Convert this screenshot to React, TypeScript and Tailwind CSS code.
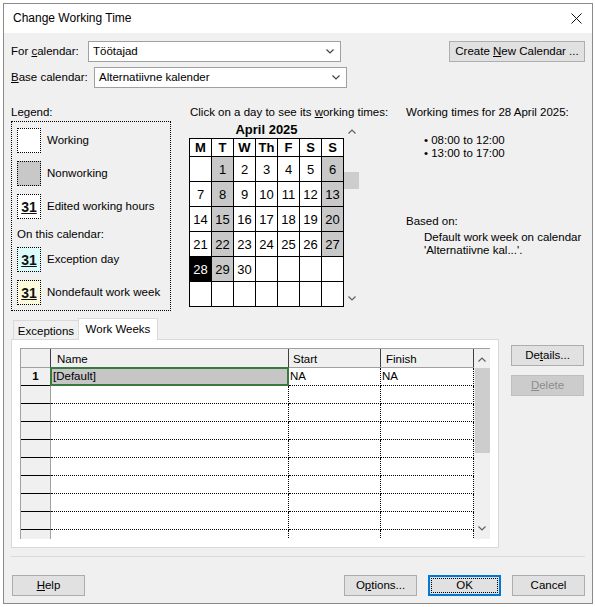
import React from 'react';

const Chevron = ({ up = false, color = '#606060', w = 8 }: { up?: boolean; color?: string; w?: number }) => (
  <svg width={w} height="5" viewBox={`0 0 ${w} 5`}>
    <polyline
      points={up ? `0.5,4.5 ${w / 2},1 ${w - 0.5},4.5` : `0.5,0.5 ${w / 2},4 ${w - 0.5},0.5`}
      fill="none"
      stroke={color}
      strokeWidth="1.2"
    />
  </svg>
);

const Btn = ({ children, className = '' }: { children: React.ReactNode; className?: string }) => (
  <div className={`h-[21px] flex items-center justify-center bg-[#e1e1e1] border border-[#adadad] ${className}`}>
    <span>{children}</span>
  </div>
);

const Combo = ({ value }: { value: string }) => (
  <div className="w-[253px] h-[21px] bg-white border border-[#a0a0a0] flex items-center pl-[4px] pr-[6px]">
    <span className="flex-1">{value}</span>
    <Chevron color="#444" w={8} />
  </div>
);

const Swatch = ({ bg, num = false }: { bg: string; num?: boolean }) => (
  <div className={`w-[24px] h-[25px] shrink-0 border border-dotted border-black flex items-center justify-center ${bg}`}>
    {num && <span className="font-bold text-[14px] underline leading-none text-[#111]">31</span>}
  </div>
);

const weeks: (number | null)[][] = [
  [null, 1, 2, 3, 4, 5, 6],
  [7, 8, 9, 10, 11, 12, 13],
  [14, 15, 16, 17, 18, 19, 20],
  [21, 22, 23, 24, 25, 26, 27],
  [28, 29, 30, null, null, null, null],
  [null, null, null, null, null, null, null],
];

const dayCls = (d: number | null, col: number) => {
  if (d === 28) return 'bg-black text-white';
  if (d && (col === 1 || col === 6)) return 'bg-[#c8c8c8]';
  return 'bg-white';
};

const GridRow = ({ first = false }: { first?: boolean }) => (
  <div className="flex h-[18px]">
    <div className="w-[30px] bg-[#f0f0f0] border-b border-b-black border-r border-r-[#a0a0a0] flex items-center justify-center font-bold">
      {first ? '1' : ''}
    </div>
    <div className="relative w-[238px] border-b border-r border-dotted border-black flex items-center pl-[2px] bg-white">
      {first && (
        <>
          <div className="absolute -left-px -top-px -right-px -bottom-px bg-[#c6c6c6] border-2 border-[#3b7a3e]" />
          <span className="relative">[Default]</span>
        </>
      )}
    </div>
    <div className="w-[92px] border-b border-r border-dotted border-black flex items-center pl-[1px] bg-white">
      {first ? 'NA' : ''}
    </div>
    <div className="w-[93px] border-b border-r border-dotted border-black flex items-center pl-[1px] bg-white">
      {first ? 'NA' : ''}
    </div>
  </div>
);

export default function App() {
  return (
    <div className="w-[595px] h-[607px] bg-white pt-[3px] pl-[3px] font-['Liberation_Sans',Arial,sans-serif] text-black text-[11.5px] leading-[15px]">
      <div className="w-[590px] h-[601px] border border-[#8a8a8a] flex flex-col">
        {/* title bar */}
        <div className="h-[29px] bg-white flex items-center pl-[9px] pr-[10px]">
          <span className="flex-1 text-[12px]">Change Working Time</span>
          <svg width="11" height="11" viewBox="0 0 11 11">
            <path d="M0.5 0.5 L10.5 10.5 M10.5 0.5 L0.5 10.5" stroke="#111" strokeWidth="1" />
          </svg>
        </div>

        {/* body */}
        <div className="flex-1 bg-[#f0f0f0] pt-[8px] px-[7px]">
          {/* calendar selectors */}
          <div className="flex justify-between">
            <div className="flex flex-col gap-[5px]">
              <div className="flex items-center">
                <span className="w-[77px]">
                  For <span className="underline">c</span>alendar:
                </span>
                <Combo value="Töötajad" />
              </div>
              <div className="flex items-center">
                <span className="w-[83px]">
                  <span className="underline">B</span>ase calendar:
                </span>
                <Combo value="Alternatiivne kalender" />
              </div>
            </div>
            <Btn className="w-[136px]">
              Create <span className="underline">N</span>ew Calendar ...
            </Btn>
          </div>

          {/* legend / calendar / details */}
          <div className="flex mt-[17px]">
            <div className="w-[160px]">
              <div className="h-[15px]">Legend:</div>
              <div className="mt-[1px] h-[190px] border border-dotted border-black pl-[5px] pt-[6px] flex flex-col">
                <div className="flex items-center gap-[6px]">
                  <Swatch bg="bg-white" />
                  <span>Working</span>
                </div>
                <div className="flex items-center gap-[6px] mt-[8px]">
                  <Swatch bg="bg-[#c8c8c8]" />
                  <span>Nonworking</span>
                </div>
                <div className="flex items-center gap-[6px] mt-[8px]">
                  <Swatch bg="bg-white" num />
                  <span>Edited working hours</span>
                </div>
                <div className="mt-[8px] h-[14px] leading-[14px]">On this calendar:</div>
                <div className="flex items-center gap-[6px] mt-[6px]">
                  <Swatch bg="bg-[#dcfbfb]" num />
                  <span>Exception day</span>
                </div>
                <div className="flex items-center gap-[6px] mt-[8px]">
                  <Swatch bg="bg-[#fcfadc]" num />
                  <span>Nondefault work week</span>
                </div>
              </div>
            </div>

            <div className="w-[217px] ml-[18px]">
              <div className="h-[15px] whitespace-nowrap pl-[1px]">
                Click on a day to see its <span className="underline">w</span>orking times:
              </div>
              <div className="flex mt-[1px]">
                <div className="flex flex-col">
                  <div className="h-[17px] flex items-center justify-center font-bold text-[13px]">April 2025</div>
                  <div className="grid grid-cols-[repeat(7,21px)] grid-rows-[17px_repeat(6,24px)] gap-px bg-black border border-black w-fit">
                    {['M', 'T', 'W', 'Th', 'F', 'S', 'S'].map((h, i) => (
                      <div key={i} className="bg-white flex items-center justify-center font-bold text-[13px]">
                        {h}
                      </div>
                    ))}
                    {weeks.map((wk, r) =>
                      wk.map((d, c) => (
                        <div key={`${r}-${c}`} className={`flex items-center justify-center text-[13px] ${dayCls(d, c)}`}>
                          {d ?? ''}
                        </div>
                      ))
                    )}
                  </div>
                </div>
                <div className="w-[15px] flex flex-col items-center">
                  <div className="mt-[8px] h-[5px]">
                    <Chevron up w={8} />
                  </div>
                  <div className="mt-[38px] w-[15px] h-[17px] bg-[#cdcdcd]" />
                  <div className="mt-[107px] h-[5px]">
                    <Chevron w={8} />
                  </div>
                </div>
              </div>
            </div>

            <div className="flex flex-col">
              <div className="h-[15px] whitespace-nowrap">Working times for 28 April 2025:</div>
              <div className="mt-[14px] pl-[18px] leading-[13px]">
                <div>• 08:00 to 12:00</div>
                <div>• 13:00 to 17:00</div>
              </div>
              <div className="mt-[54px] h-[15px]">Based on:</div>
              <div className="mt-[2px] pl-[18px] leading-[13px] whitespace-nowrap">
                <div>Default work week on calendar</div>
                <div>'Alternatiivne kal...'.</div>
              </div>
            </div>
          </div>

          {/* tabs */}
          <div className="flex mt-[7px]">
            <div className="w-[488px] flex flex-col">
              <div className="h-[21px] flex items-end pl-[2px]">
                <div className="h-[19px] w-[66px] border border-b-0 border-[#d9d9d9] bg-[#f0f0f0] flex items-center justify-center pt-[2px]">
                  Exceptions
                </div>
                <div className="relative z-10 -mb-px -ml-px h-[22px] w-[80px] border border-b-0 border-[#d9d9d9] bg-white flex items-center justify-center">
                  Work Weeks
                </div>
              </div>
              <div className="h-[209px] border border-[#d9d9d9] bg-white pl-[8px] pt-[8px]">
                <div className="flex h-[191px] w-[470px] overflow-hidden">
                  <div className="w-[454px] border-t border-l border-[#a0a0a0] overflow-hidden">
                    <div className="flex h-[19px] bg-[#f0f0f0] border-b border-[#a0a0a0]">
                      <div className="w-[30px] border-r border-[#404040]" />
                      <div className="w-[238px] border-r border-[#404040] pl-[6px] pt-[3px]">Name</div>
                      <div className="w-[92px] border-r border-[#404040] pl-[4px] pt-[3px]">Start</div>
                      <div className="w-[93px] border-r border-[#404040] pl-[5px] pt-[3px]">Finish</div>
                    </div>
                    <GridRow first />
                    {Array.from({ length: 10 }).map((_, i) => (
                      <GridRow key={i} />
                    ))}
                  </div>
                  <div className="w-[16px] bg-[#f0f0f0] border-t border-[#a0a0a0] flex flex-col items-center">
                    <div className="mt-[8px] h-[5px]">
                      <Chevron up w={8} />
                    </div>
                    <div className="mt-[6px] w-[15px] h-[85px] bg-[#cdcdcd]" />
                    <div className="mt-[73px] h-[5px]">
                      <Chevron w={8} />
                    </div>
                  </div>
                </div>
              </div>
            </div>
            <div className="ml-[12px] pt-[27px] flex flex-col gap-[9px]">
              <Btn className="w-[73px]">
                De<span className="underline">t</span>ails...
              </Btn>
              <Btn className="w-[73px] !bg-[#cccccc] !border-[#bfbfbf] text-[#8d8d8d]">
                <span className="underline">D</span>elete
              </Btn>
            </div>
          </div>

          {/* footer */}
          <div className="mt-[8px] h-px bg-[#dadada]" />
          <div className="mt-[18px] flex items-center pl-px">
            <Btn className="w-[73px]">
              <span className="underline">H</span>elp
            </Btn>
            <div className="flex-1" />
            <Btn className="w-[73px]">
              O<span className="underline">p</span>tions...
            </Btn>
            <div className="ml-[11px] w-[73px] h-[21px] bg-[#e1e1e1] border-2 border-[#0078d7] p-[1px]">
              <div className="w-full h-full border border-dotted border-black flex items-center justify-center">OK</div>
            </div>
            <Btn className="ml-[11px] w-[73px]">Cancel</Btn>
          </div>
        </div>
      </div>
    </div>
  );
}
